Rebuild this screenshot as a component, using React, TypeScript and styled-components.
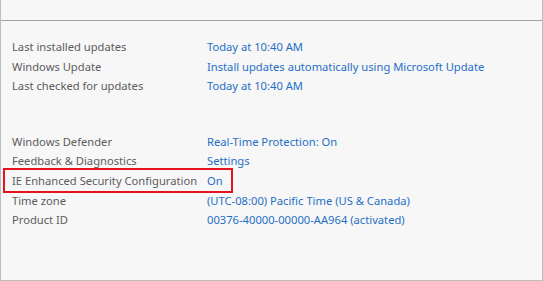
import React from "react";
import styled, { createGlobalStyle } from "styled-components";

const Global = createGlobalStyle`
  html, body { margin: 0; padding: 0; background: #f7f7f7; }
  #root { width: 543px; height: 281px; }
`;

const Frame = styled.div`
  box-sizing: border-box;
  width: 543px;
  height: 281px;
  background: #f7f7f7;
  border-left: 1px solid #bcbcbc;
  border-right: 1px solid #bcbcbc;
  border-bottom: 1px solid #bcbcbc;
  display: flex;
  flex-direction: column;
  font-family: "Noto Sans", "Open Sans", sans-serif;
  font-size: 11.2px;
`;

const Header = styled.div`
  height: 20px;
  border-bottom: 1px solid #a3a3a3;
  flex: none;
`;

const Body = styled.div`
  padding: 16px 0 0 11px;
  display: flex;
  flex-direction: column;
`;

const Group = styled.div<{ $gap?: number }>`
  display: flex;
  flex-direction: column;
  margin-top: ${(p) => p.$gap ?? 0}px;
`;

const Row = styled.div`
  position: relative;
  display: grid;
  grid-template-columns: 195px auto;
  height: 19.6px;
  line-height: 19.6px;
  white-space: nowrap;
`;

const Label = styled.span`
  color: #5c5c5c;
`;

const Value = styled.span`
  color: #1f6fc5;
`;

const Highlight = styled.div`
  position: absolute;
  left: -9px;
  top: -3px;
  width: 230px;
  height: 25px;
  box-sizing: border-box;
  border: 2px solid #e3141f;
  pointer-events: none;
`;

const first = [
  ["Last installed updates", "Today at 10:40 AM"],
  ["Windows Update", "Install updates automatically using Microsoft Update"],
  ["Last checked for updates", "Today at 10:40 AM"],
];

const second: [string, string, boolean?][] = [
  ["Windows Defender", "Real-Time Protection: On"],
  ["Feedback & Diagnostics", "Settings"],
  ["IE Enhanced Security Configuration", "On", true],
  ["Time zone", "(UTC-08:00) Pacific Time (US & Canada)"],
  ["Product ID", "00376-40000-00000-AA964 (activated)"],
];

export default function App() {
  return (
    <>
      <Global />
      <Frame>
        <Header />
        <Body>
          <Group>
            {first.map(([l, v]) => (
              <Row key={l}>
                <Label>{l}</Label>
                <Value>{v}</Value>
              </Row>
            ))}
          </Group>
          <Group $gap={36}>
            {second.map(([l, v, h]) => (
              <Row key={l}>
                <Label>{l}</Label>
                <Value>{v}</Value>
                {h && <Highlight />}
              </Row>
            ))}
          </Group>
        </Body>
      </Frame>
    </>
  );
}
